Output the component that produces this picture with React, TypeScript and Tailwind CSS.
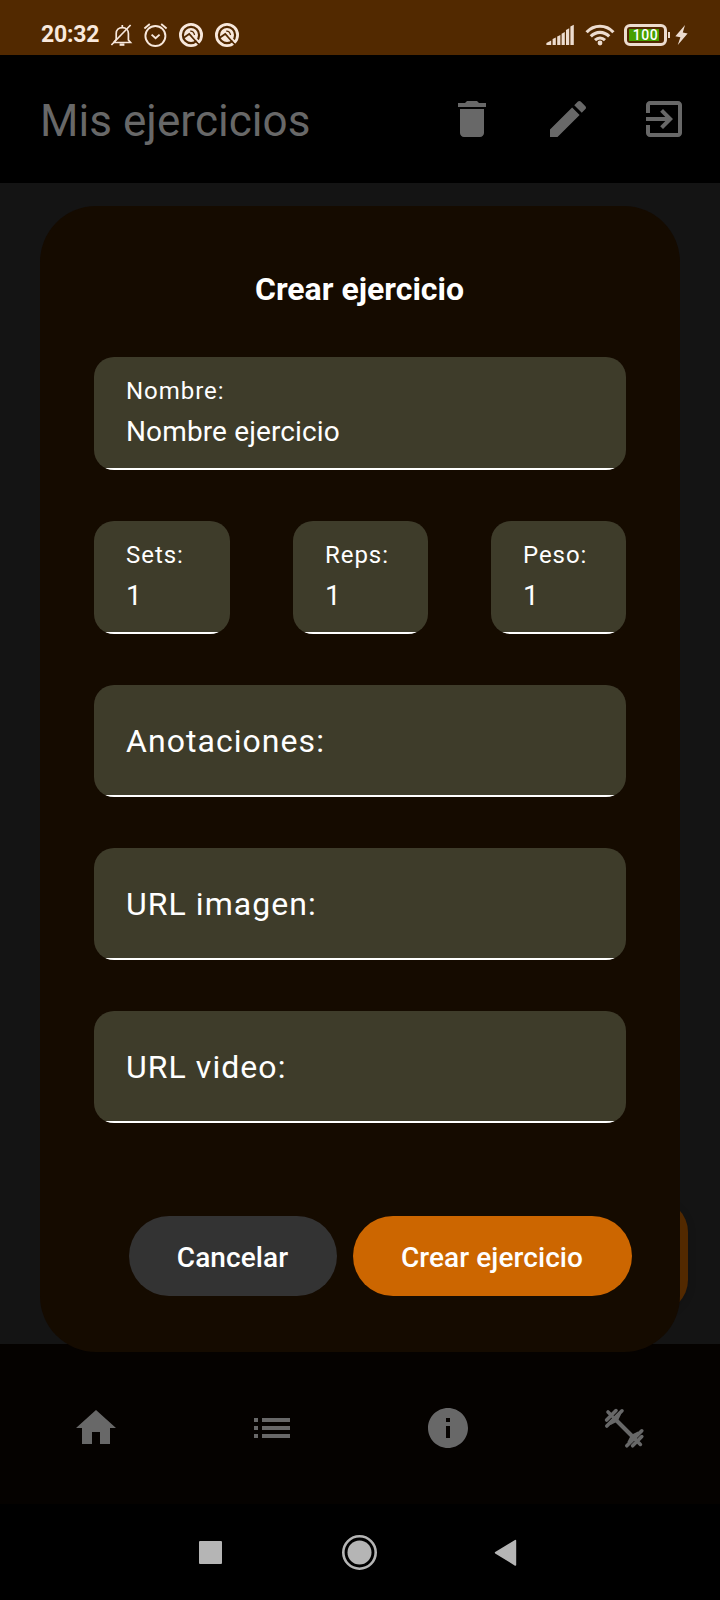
import React from "react";

const icons = {
  trash: "M6 19c0 1.1.9 2 2 2h8c1.1 0 2-.9 2-2V7H6v12zM19 4h-3.5l-1-1h-5l-1 1H5v2h14V4z",
  edit: "M3 17.25V21h3.75L17.81 9.94l-3.75-3.75L3 17.25zM20.71 7.04c.39-.39.39-1.02 0-1.41l-2.34-2.34c-.39-.39-1.02-.39-1.41 0l-1.83 1.83 3.75 3.75 1.83-1.83z",
  exit: "M10.09 15.59L11.5 17l5-5-5-5-1.41 1.41L12.67 11H3v2h9.67l-2.58 2.59zM19 3H5c-1.11 0-2 .9-2 2v4h2V5h14v14H5v-4H3v4c0 1.1.89 2 2 2h14c1.1 0 2-.9 2-2V5c0-1.1-.9-2-2-2z",
  home: "M10 20v-6h4v6h5v-8h3L12 3 2 12h3v8z",
  list: "M3 13h2v-2H3v2zm0 4h2v-2H3v2zm0-8h2V7H3v2zm4 4h14v-2H7v2zm0 4h14v-2H7v2zM7 7v2h14V7H7z",
  info: "M12 2C6.48 2 2 6.48 2 12s4.48 10 10 10 10-4.48 10-10S17.52 2 12 2zm1 15h-2v-6h2v6zm0-8h-2V7h2v2z",
};

function Icon({ path }: { path: string }) {
  return (
    <svg className="size-12 text-[#686868]" viewBox="0 0 24 24" fill="currentColor">
      <path d={path} />
    </svg>
  );
}

function Dumbbell() {
  return (
    <svg className="size-12 text-[#686868]" viewBox="0 0 48 48" fill="none" stroke="currentColor" strokeWidth="3.6" strokeLinecap="round">
      <path d="M14 14L35 35" strokeWidth="4" />
      <path d="M6.8 22L22 6.8M6.6 16L16 6.6M8 8l4 4" />
      <path d="M8.2 18.6L18.6 8.2L21 10.6L17.5 17.5L10.6 21z" fill="currentColor" stroke="none" />
      <path d="M26.8 41.8L41.8 26.8M32.6 41.8L41.8 32.6M36 36l4.4 4.4" />
      <path d="M29.8 40.2L40.2 29.8L38 27.4L31 31L27.4 38z" fill="currentColor" stroke="none" />
    </svg>
  );
}

function AppBadgeIcon() {
  return (
    <svg className="h-[26px] w-[26px]" viewBox="0 0 26 26" fill="none" stroke="currentColor">
      <circle cx="13" cy="13" r="10.6" strokeWidth="2.8" />
      <circle cx="13" cy="13" r="7" fill="currentColor" stroke="none" />
      <path d="M5 16.2L11.2 12L22.6 24.4" stroke="#522900" strokeWidth="1.8" />
      <path d="M12.2 9.2C14.6 9 16 10.6 16.6 13" stroke="#522900" strokeWidth="1.2" />
      <path d="M15.2 13.6L21.4 20.4" strokeWidth="1.8" />
    </svg>
  );
}

function StatusBar() {
  return (
    <header className="flex h-[55px] shrink-0 items-center bg-[#522900] pt-[15px] pr-[32px] pl-[41px] text-[#f8e8dc]">
      <span className="w-[58px] text-[23px] leading-6 font-bold tracking-[-0.2px]">20:32</span>
      <svg className="ml-[11px] h-6 w-6" viewBox="0 0 24 24" fill="none" stroke="currentColor" strokeWidth="1.7">
        <path d="M3.5 19.5H20.5L18.4 17V10.5C18.4 7 16 4.6 12.4 4.6S6.2 7 6.2 10.5V16.5L3.8 19.5" />
        <path d="M1.4 22L20.6 2" />
        <path d="M9.6 21.6h4.8" strokeWidth="2.4" />
        <path d="M12.3 2v3" />
      </svg>
      <svg className="ml-[9px] h-[26px] w-[26px]" viewBox="0 0 26 26" fill="none" stroke="currentColor" strokeWidth="1.9">
        <circle cx="12.4" cy="14" r="10" />
        <path d="M8.6 12.6l4 3.6 4-3.6M1.4 6.4L6.8 2M23.6 6.4L18.2 2" />
      </svg>
      <div className="ml-[9px] flex gap-[10px]">
        <AppBadgeIcon />
        <AppBadgeIcon />
      </div>
      <div className="ml-auto flex items-center text-[#eddccf]">
        <svg className="h-[22px] w-[30px]" viewBox="0 0 30 22" fill="currentColor">
          <path d="M.4 21v-2l4.8-2.4V21zM6.6 21v-6l3.2-1.4V21zM11.2 21v-8.4l3.2-1.6V21zM15.6 21V9.8L18.8 8v13zM20 21V6l3.2-1.8V21zM24.4 21V2.4L27.8.8V21z" />
        </svg>
        <svg className="ml-[9px] h-[22px] w-[30px]" viewBox="0 0 30 22" fill="none" stroke="currentColor" strokeWidth="3.1">
          <path d="M1.6 8.2C9 .2 21 .2 28.4 8.2M5.8 12.4c5.2-5.4 13.2-5.4 18.4 0M10 16.2c3-2.8 7-2.8 10 0" />
          <circle cx="15" cy="19" r="2.4" fill="currentColor" stroke="none" />
        </svg>
        <div className="ml-[9px] flex h-[22px] w-[43px] items-center rounded-[6px] border-[3px] border-current p-[2px]">
          <div className="flex h-[12px] w-full items-center justify-center bg-[linear-gradient(to_right,#46a000_90%,transparent_90%)] text-[14px] leading-[12px] font-medium tracking-[0.5px] text-white">
            100
          </div>
        </div>
        <div className="ml-px h-[6px] w-[2px] bg-current" />
        <svg className="ml-[5px] h-5 w-[13px]" viewBox="0 0 14 20" preserveAspectRatio="none" fill="currentColor">
          <path d="M10.8 0L.4 11.2l5.4 1L3 20 13.6 8.6 8.4 7.6z" />
        </svg>
      </div>
    </header>
  );
}

function Field({ label, value, className = "" }: { label: string; value?: string; className?: string }) {
  return (
    <div className={`flex flex-col overflow-hidden rounded-[20px] bg-[#3e3c2a] text-white ${className}`}>
      {value ? (
        <div className="grow px-8 pt-[18px]">
          <div className="text-[24px] leading-8 tracking-[0.95px]">{label}</div>
          <div className="mt-[5px] text-[28px] leading-10 tracking-[0.13px]">{value}</div>
        </div>
      ) : (
        <div className="flex grow items-center px-8 pt-[2px] text-[32px] tracking-[1.05px]">{label}</div>
      )}
      <div className="h-[2px] shrink-0 bg-white" />
    </div>
  );
}

export default function App() {
  return (
    <div className="relative flex h-[1600px] w-[720px] flex-col overflow-hidden bg-black font-['Roboto',sans-serif]">
      <StatusBar />
      <div className="flex h-32 shrink-0 items-center bg-black pr-8 pl-10">
        <h1 className="grow pt-1 text-[44px] leading-[56px] tracking-[0.06px] text-[#686868]">Mis ejercicios</h1>
        <div className="flex gap-12">
          <Icon path={icons.trash} />
          <Icon path={icons.edit} />
          <Icon path={icons.exit} />
        </div>
      </div>
      <main className="flex grow items-end justify-end bg-[#141414] px-8 pb-8">
        <div className="size-28 rounded-[32px] bg-[#522900] shadow-[0_2px_8px_rgba(0,0,0,0.15)]" />
      </main>
      <nav className="grid h-40 shrink-0 grid-cols-4 gap-2 bg-[#050200] px-3">
        <div className="flex justify-center pt-[60px]"><Icon path={icons.home} /></div>
        <div className="flex justify-center pt-[60px]"><Icon path={icons.list} /></div>
        <div className="flex justify-center pt-[60px]"><Icon path={icons.info} /></div>
        <div className="flex justify-center pt-[60px]"><Dumbbell /></div>
      </nav>
      <footer className="flex h-24 shrink-0 items-center bg-black pl-[199px] text-[#b5b5b5]">
        <div className="size-[23px] rounded-[1px] bg-current" />
        <svg className="ml-[119px] size-9" viewBox="0 0 36 36" fill="currentColor">
          <circle cx="18.5" cy="18.5" r="16.2" fill="none" stroke="currentColor" strokeWidth="2.6" />
          <circle cx="18.5" cy="18.5" r="12" />
        </svg>
        <svg className="ml-[116px] h-[27px] w-6" viewBox="0 0 24 27" fill="currentColor" stroke="currentColor" strokeWidth="1.6" strokeLinejoin="round">
          <path d="M2.6 13.7L22.4 1.6v24.4z" />
        </svg>
      </footer>

      <div role="dialog" className="absolute top-[206px] left-10 flex h-[1146px] w-[640px] flex-col rounded-[56px] bg-[#150b00] px-[54px] pt-[63px]">
        <h2 className="-ml-px text-center text-[32px] leading-10 font-bold text-white">Crear ejercicio</h2>
        <Field className="mt-12 h-[113px]" label="Nombre:" value="Nombre ejercicio" />
        <div className="mt-[51px] flex justify-between">
          <Field className="h-[113px] w-[136px]" label="Sets:" value="1" />
          <Field className="h-[113px] w-[135px]" label="Reps:" value="1" />
          <Field className="h-[113px] w-[135px]" label="Peso:" value="1" />
        </div>
        <div className="mt-[51px] flex flex-col gap-[51px]">
          <Field className="h-28" label="Anotaciones:" />
          <Field className="h-28" label="URL imagen:" />
          <Field className="h-28" label="URL video:" />
        </div>
        <div className="-mr-[6px] mt-[93px] flex justify-end gap-4 text-[28px] leading-10 font-medium tracking-[0.08px] text-white">
          <button className="h-20 w-52 rounded-full bg-[#333333] pt-1 pr-[1px]">Cancelar</button>
          <button className="h-20 w-[279px] rounded-full bg-[#cc6600] pt-1 pr-[1px]">Crear ejercicio</button>
        </div>
      </div>
    </div>
  );
}
